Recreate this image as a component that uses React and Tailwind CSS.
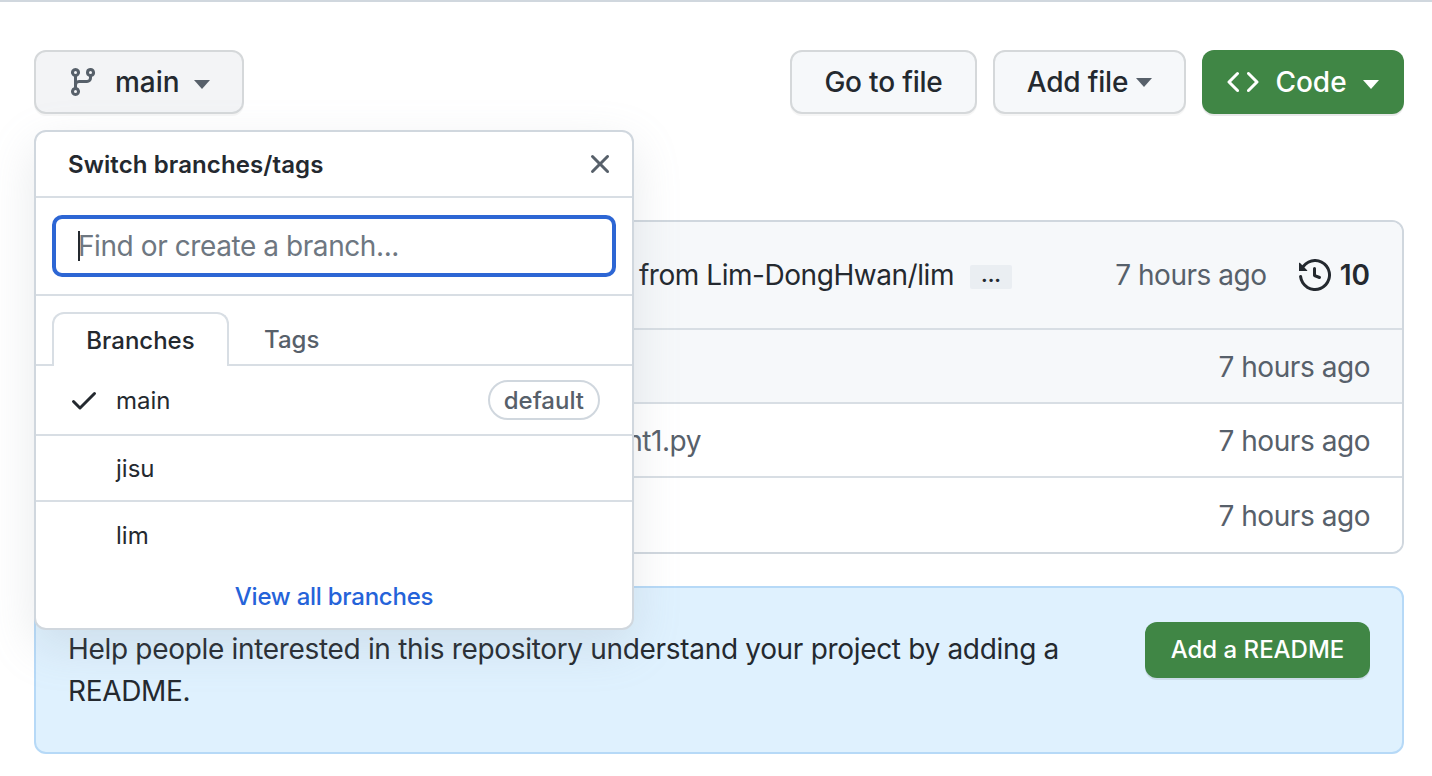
import React from 'react';

const Octicon = ({ d, size = 32, className }) => (
  <svg width={size} height={size} viewBox="0 0 16 16" fill="currentColor" className={`shrink-0 ${className || ''}`}>
    <path d={d} />
  </svg>
);

const BRANCH = 'M9.5 3.25a2.25 2.25 0 1 1 3 2.122V6A2.5 2.5 0 0 1 10 8.5H6a1 1 0 0 0-1 1v1.128a2.251 2.251 0 1 1-1.5 0V5.372a2.25 2.25 0 1 1 1.5 0v1.836A2.493 2.493 0 0 1 6 7h4a1 1 0 0 0 1-1v-.628A2.25 2.25 0 0 1 9.5 3.25Zm-6 0a.75.75 0 1 0 1.5 0 .75.75 0 0 0-1.5 0Zm8.25-.75a.75.75 0 1 0 0 1.5.75.75 0 0 0 0-1.5ZM4.25 12a.75.75 0 1 0 0 1.5.75.75 0 0 0 0-1.5Z';
const CLOSE = 'M3.72 3.72a.75.75 0 0 1 1.06 0L8 6.94l3.22-3.22a.749.749 0 0 1 1.275.326.749.749 0 0 1-.215.734L9.06 8l3.22 3.22a.749.749 0 0 1-.326 1.275.749.749 0 0 1-.734-.215L8 9.06l-3.22 3.22a.751.751 0 0 1-1.042-.018.751.751 0 0 1-.018-1.042L6.94 8 3.72 4.78a.75.75 0 0 1 0-1.06Z';
const CHECK = 'M13.78 4.22a.75.75 0 0 1 0 1.06l-7.25 7.25a.75.75 0 0 1-1.06 0L2.22 9.28a.751.751 0 0 1 .018-1.042.751.751 0 0 1 1.042-.018L6 10.94l6.72-6.72a.75.75 0 0 1 1.06 0Z';
const CODE = 'm11.28 3.22 4.25 4.25a.75.75 0 0 1 0 1.06l-4.25 4.25a.749.749 0 0 1-1.275-.326.749.749 0 0 1 .215-.734L13.94 8l-3.72-3.72a.749.749 0 0 1 .326-1.275.749.749 0 0 1 .734.215Zm-6.56 0a.751.751 0 0 1 1.042.018.751.751 0 0 1 .018 1.042L2.06 8l3.72 3.72a.749.749 0 0 1-.326 1.275.749.749 0 0 1-.734-.215L.47 8.53a.75.75 0 0 1 0-1.06Z';
const HISTORY = 'm.427 1.927 1.215 1.215a8.002 8.002 0 1 1-1.6 5.685.75.75 0 1 1 1.493-.154 6.5 6.5 0 1 0 1.18-4.458l1.358 1.358A.25.25 0 0 1 3.896 6H.25A.25.25 0 0 1 0 5.75V2.104a.25.25 0 0 1 .427-.177ZM7.75 4a.75.75 0 0 1 .75.75v2.992l2.028.812a.75.75 0 0 1-.557 1.392l-2.5-1A.751.751 0 0 1 7 8.25v-3.5A.75.75 0 0 1 7.75 4Z';

const Caret = ({ className }) => (
  <svg width="16" height="9" viewBox="0 0 16 9" className={className} fill="currentColor">
    <path d="M0 0h16L8 9z" />
  </svg>
);

const FileRow = ({ name, shaded, last }) => (
  <div className={`h-[74px] flex items-center justify-between pr-[32px] pt-[2px] tracking-[-0.45px] ${last ? '' : 'border-b-2 border-[#d8dee4]'} ${shaded ? 'bg-[#f6f8fa]' : 'bg-white'}`}>
    <span className="w-[665px] text-right text-[28px] text-[#57606a]">{name}</span>
    <span className="text-[28px] text-[#57606a]">7 hours ago</span>
  </div>
);

const BranchRow = ({ name, active, height }) => (
  <div className={`flex items-center justify-between pl-[32px] pr-[32px] ${height}`}>
    <div className="flex items-center">
      <div className="w-[48px] flex items-center">
        {active && <Octicon d={CHECK} className="text-[#24292f]" />}
      </div>
      <span className="pt-[2px] text-[24px] text-[#24292f]">{name}</span>
    </div>
    {active && (
      <span className="h-[40px] px-[14px] pt-[2px] flex items-center rounded-full border-2 border-[#d0d7de] text-[24px] font-medium text-[#57606a]">default</span>
    )}
  </div>
);

const BranchMenu = () => (
  <div className="absolute left-[34px] top-[128px] w-[600px] h-[500px] bg-white border-2 border-[#d0d7de] rounded-[12px] shadow-[0_16px_48px_rgba(140,149,159,0.2)] z-10">
    <div className="h-[66px] flex items-center justify-between pl-[32px] pr-[16px] border-b-2 border-[#d8dee4]">
      <span className="pt-[2px] text-[24px] font-semibold text-[#24292f] tracking-[0.1px]">Switch branches/tags</span>
      <Octicon d={CLOSE} className="text-[#57606a]" />
    </div>
    <div className="h-[98px] px-[16px] flex items-center border-b-2 border-[#d8dee4]">
      <div className="w-full h-[62px] rounded-[10px] border-4 border-[#2d66d4] flex items-center pl-[22px] relative">
        <span className="absolute left-[22px] top-[12px] h-[30px] w-[2px] bg-[#24292f]" />
        <span className="text-[28px] text-[#6e7781] tracking-[-0.42px]">Find or create a branch...</span>
      </div>
    </div>
    <div className="h-[70px] flex items-end px-[16px] border-b-2 border-[#d8dee4]">
      <div className="w-[177px] h-[54px] -mb-[2px] pt-[1px] bg-white border-2 border-b-0 border-[#d8dee4] rounded-t-[12px] flex items-center justify-center text-[24px] font-medium text-[#24292f]">
        Branches
      </div>
      <div className="h-[54px] -mb-[2px] pt-[2px] ml-[35px] flex items-center text-[24px] font-medium text-[#57606a]">Tags</div>
    </div>
    <BranchRow name="main" active height="h-[70px] border-b-2 border-[#d8dee4]" />
    <BranchRow name="jisu" height="h-[66px] border-b-2 border-[#d8dee4]" />
    <BranchRow name="lim" height="h-[66px]" />
    <div className="mt-[11px] text-center text-[24px] font-medium text-[#2563d9] tracking-[-0.25px]">View all branches</div>
  </div>
);

export default function App() {
  return (
    <div className="relative h-[776px] overflow-hidden bg-white font-['Inter',sans-serif] text-[#24292f] border-t-2 border-[#d0d7de]">
      <div className="pl-[34px] pr-[28px] pt-[48px]">
        <div className="flex items-center justify-between">
          <div className="w-[210px] h-[64px] rounded-[12px] border-2 border-[#d5d8da] bg-[#f3f4f6] shadow-[0_2px_0_rgba(27,31,36,0.04)] flex items-center pl-[31px]">
            <Octicon d={BRANCH} className="text-[#57606a]" />
            <span className="ml-[16px] text-[28px] font-medium">main</span>
            <Caret className="ml-[14px] mt-[4px] text-[#57606a]" />
          </div>
          <div className="flex items-center gap-[16px]">
            <div className="w-[187px] h-[64px] rounded-[12px] border-2 border-[#d5d8da] bg-[#f6f8fa] shadow-[0_2px_0_rgba(27,31,36,0.04)] flex items-center justify-center text-[28px] font-medium tracking-[-0.2px]">
              Go to file
            </div>
            <div className="w-[193px] h-[64px] rounded-[12px] border-2 border-[#d5d8da] bg-[#f6f8fa] shadow-[0_2px_0_rgba(27,31,36,0.04)] flex items-center justify-center text-[28px] font-medium tracking-[-0.2px]">
              Add file
              <Caret className="ml-[8px] text-[#57606a]" />
            </div>
            <div className="w-[202px] h-[64px] rounded-[12px] bg-[#408645] shadow-[0_2px_0_rgba(27,31,36,0.1)] flex items-center justify-center text-[28px] font-medium text-white">
              <Octicon d={CODE} />
              <span className="ml-[16px]">Code</span>
              <Caret className="ml-[16px] mt-[4px]" />
            </div>
          </div>
        </div>

        <div className="mt-[106px] h-[334px] rounded-[12px] border-2 border-[#d0d7de] overflow-hidden">
          <div className="h-[108px] bg-[#f6f8fa] border-b-2 border-[#d8dee4] flex items-center pr-[32px]">
            <span className="w-[918px] text-right text-[28px] whitespace-nowrap tracking-[-0.45px]">Merge pull request #3 from Lim-DongHwan/lim</span>
            <span className="ml-[16px] w-[42px] h-[24px] mt-[4px] bg-[#eaeef2] rounded-[2px] flex items-center justify-center text-[20px] font-bold leading-none pb-[4px]">...</span>
            <span className="ml-auto text-[28px] text-[#57606a] tracking-[-0.45px]">7 hours ago</span>
            <Octicon d={HISTORY} className="ml-[32px] text-[#24292f]" />
            <span className="ml-[9px] text-[28px] font-semibold">10</span>
          </div>
          <FileRow name="" shaded />
          <FileRow name="assignment1.py" />
          <FileRow name="" last />
        </div>

        <div className="mt-[32px] h-[168px] rounded-[12px] border-2 border-[#b6d9f7] bg-[#dff1fe] flex items-start justify-between pl-[32px] pr-[32px] pt-[34px]">
          <p className="w-[1010px] mt-[6px] text-[28px] leading-[42px] tracking-[-0.32px]">
            Help people interested in this repository understand your project by adding a README.
          </p>
          <div className="w-[225px] h-[56px] rounded-[12px] bg-[#408645] shadow-[0_2px_0_rgba(27,31,36,0.1)] flex items-center justify-center text-[24px] font-medium text-white">
            Add a README
          </div>
        </div>
      </div>
      <BranchMenu />
    </div>
  );
}
